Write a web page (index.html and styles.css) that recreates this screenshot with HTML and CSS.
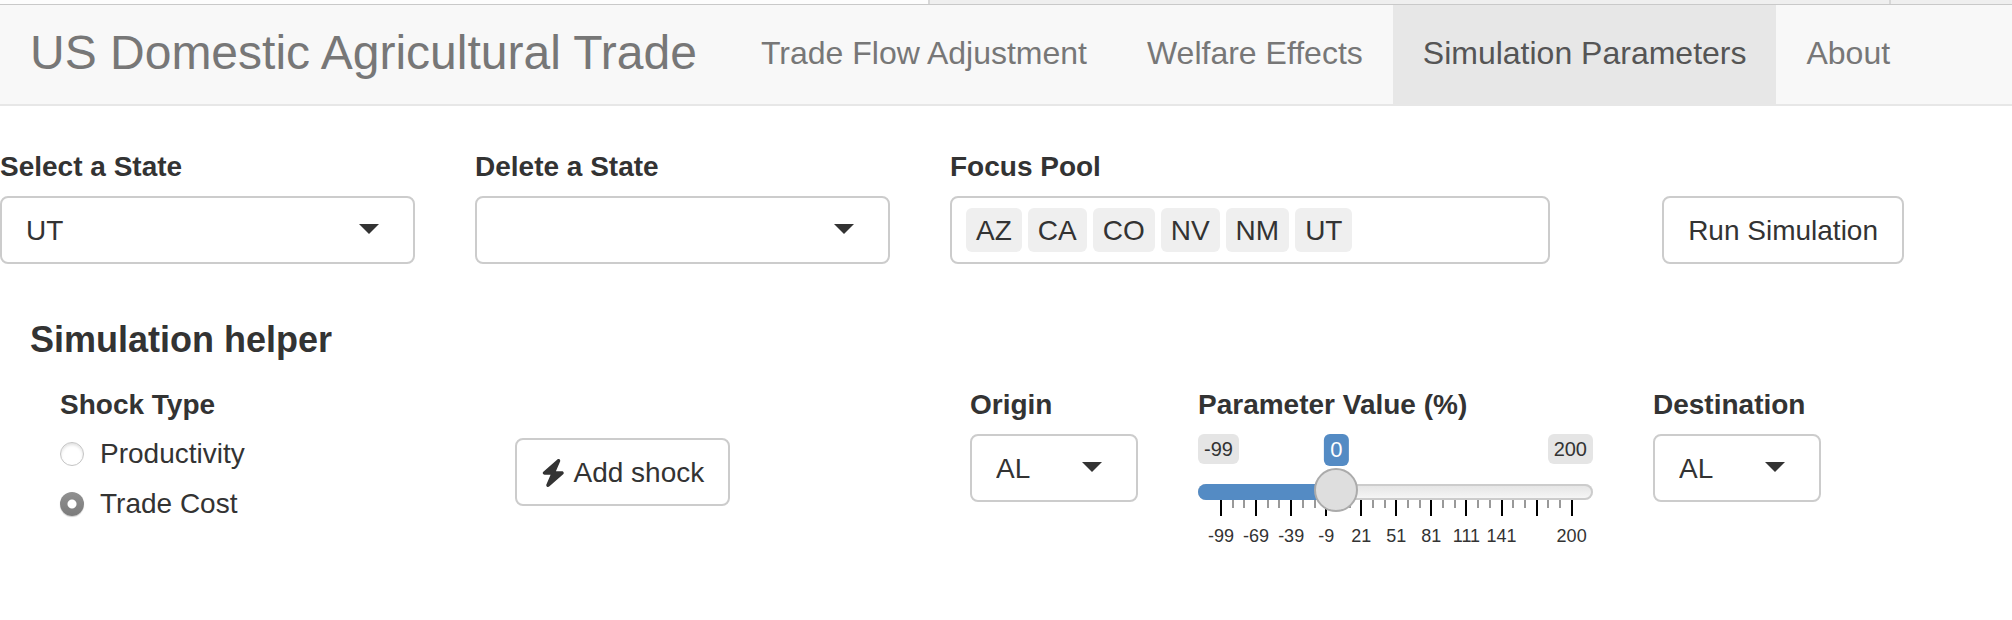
FILE: index.html
```html
<!DOCTYPE html>
<html lang="en">
<head>
<meta charset="utf-8">
<title>US Domestic Agricultural Trade</title>
<link rel="stylesheet" href="styles.css">
</head>
<body>
<div class="tabstrip"><span></span><span></span><span></span></div>
<nav class="navbar">
  <a class="brand" href="#">US Domestic Agricultural Trade</a>
  <a class="tab" href="#">Trade Flow Adjustment</a>
  <a class="tab" href="#">Welfare Effects</a>
  <a class="tab active" href="#" aria-current="page">Simulation Parameters</a>
  <a class="tab" href="#">About</a>
</nav>
<main>
  <div class="state-row">
    <div>
      <label class="title" for="add-state">Select a State</label>
      <div class="select"><select id="add-state"><option>UT</option></select></div>
    </div>
    <div>
      <label class="title" for="delete-state">Delete a State</label>
      <div class="select"><select id="delete-state"><option></option></select></div>
    </div>
    <div>
      <span class="title" id="pool-label">Focus Pool</span>
      <div class="pool" role="group" aria-labelledby="pool-label">
        <span class="item">AZ</span><span class="item">CA</span><span class="item">CO</span><span class="item">NV</span><span class="item">NM</span><span class="item">UT</span>
      </div>
    </div>
    <button class="btn run" type="button">Run Simulation</button>
  </div>

  <h4>Simulation helper</h4>

  <div class="shock-row">
    <div role="radiogroup" aria-labelledby="shock-label">
      <span class="title" id="shock-label">Shock Type</span>
      <label class="radio"><input type="radio" name="shock">Productivity</label>
      <label class="radio"><input type="radio" name="shock" checked>Trade Cost</label>
    </div>
    <button class="btn add" type="button">
      <svg class="bolt" viewBox="0 0 448 512" aria-hidden="true"><path d="M349.4 44.6c5.9-13.7 1.5-29.7-10.6-38.5s-28.6-8-39.9 1.8l-256 224c-10 8.800-13.600 22.900-8.900 35.300S50.700 288 64 288H175.500L98.600 467.400c-5.900 13.700-1.500 29.700 10.600 38.500s28.600 8 39.900-1.800l256-224c10-8.800 13.600-22.900 8.900-35.300s-16.600-20.700-30-20.700H272.500L349.400 44.600z"/></svg>
      Add shock
    </button>
    <div>
      <label class="title" for="origin">Origin</label>
      <div class="select"><select id="origin"><option>AL</option></select></div>
    </div>
    <div>
      <label class="title" for="param">Parameter Value (%)</label>
      <div class="badges">
        <span class="limit">-99</span>
        <span class="limit">200</span>
        <output class="value" for="param" style="left: 35%">0</output>
      </div>
      <div class="slider">
        <div class="bar"><div class="fill" style="width: 35%"></div></div>
        <input type="range" id="param" min="-99" max="200" value="0">
      </div>
      <div class="ticks">
        <span class="major">-99</span><span></span><span></span>
        <span class="major">-69</span><span></span><span></span>
        <span class="major">-39</span><span></span><span></span>
        <span class="major">-9</span><span></span><span></span>
        <span class="major">21</span><span></span><span></span>
        <span class="major">51</span><span></span><span></span>
        <span class="major">81</span><span></span><span></span>
        <span class="major">111</span><span></span><span></span>
        <span class="major">141</span><span></span><span></span>
        <span class="major"></span><span></span><span></span>
        <span class="major">200</span>
      </div>
    </div>
    <div>
      <label class="title" for="destination">Destination</label>
      <div class="select"><select id="destination"><option>AL</option></select></div>
    </div>
  </div>
</main>
</body>
</html>
```
FILE: styles.css
```css
* { box-sizing: border-box; }

body {
  margin: 0;
  background: #fff;
  color: #333;
  font: 28px/40px "Helvetica Neue", Helvetica, "Liberation Sans", Arial, sans-serif;
}

.tabstrip {
  display: grid;
  grid-template-columns: 928fr 961fr 123fr;
  height: 5px;
  border-bottom: 1px solid #c9c9c9;
  background: #efefef;
}
.tabstrip span + span { border-left: 2px solid #d8d8d8; }
.tabstrip span:first-child { background: #fdfdfd; }

.navbar {
  display: flex;
  border-bottom: 2px solid #e7e7e7;
  background: #f8f8f8;
}
.navbar a {
  padding: 28px 30px 31px;
  color: #777;
  text-decoration: none;
  white-space: nowrap;
}
.navbar .brand { padding-right: 34px; font-size: 48px; }
.navbar .tab { font-size: 32px; }
.navbar .active { background: #e7e7e7; color: #555; }

main { padding-top: 41px; }

.state-row,
.shock-row {
  display: grid;
  column-gap: 60px;
  align-items: start;
}
.state-row {
  grid-template-columns: minmax(0, 415fr) minmax(0, 415fr) minmax(0, 600fr) minmax(0, 294fr);
  padding-right: 108px;
}
.shock-row {
  grid-template-columns: minmax(0, 395fr) minmax(0, 395fr) minmax(0, 168fr) minmax(0, 395fr) minmax(0, 168fr);
  padding: 0 191px 0 60px;
}

.title {
  display: block;
  margin-bottom: 9px;
  font-weight: bold;
  white-space: nowrap;
}

h4 {
  margin: 56px 30px 25px;
  font-size: 36px;
  line-height: 40px;
}

.select { position: relative; }
.select::after {
  content: "";
  position: absolute;
  top: 28px;
  right: 36px;
  border: 10px solid transparent;
  border-top-color: #333;
  border-bottom: 0;
  pointer-events: none;
}
select,
.btn,
.pool {
  height: 68px;
  border: 2px solid #ccc;
  border-radius: 8px;
  background: #fff;
  color: inherit;
  font: inherit;
}
select {
  display: block;
  width: 100%;
  padding: 2px 24px 0;
  appearance: none;
}

.pool {
  display: flex;
  gap: 6px;
  padding: 10px 14px;
}
.item {
  height: 44px;
  padding: 0 10px;
  border-radius: 6px;
  background: #efefef;
  line-height: 46px;
}

.btn {
  display: flex;
  align-items: center;
  gap: 8px;
  padding: 2px 24px 0;
  white-space: nowrap;
}
.run { align-self: end; justify-self: end; }
.add { justify-self: start; margin-top: 53px; }
.bolt { height: 28px; fill: #333; }

.radio {
  display: flex;
  align-items: center;
  gap: 16px;
  margin-bottom: 10px;
}
.radio input {
  width: 24px;
  height: 24px;
  margin: 0;
  border: 1px solid #c4c4c4;
  border-radius: 50%;
  background: #fff;
  box-shadow: inset 0 2px 3px #e2e2e2;
  appearance: none;
}
.radio input:checked {
  border: 0;
  background: radial-gradient(circle, #fff 4px, transparent 5px), linear-gradient(#919191, #7b7b7b);
  box-shadow: 0 1px 1px #ccc;
}

.badges {
  position: relative;
  display: flex;
  justify-content: space-between;
  align-items: start;
  height: 34px;
}
.limit,
.value {
  padding: 0 6px;
  border-radius: 6px;
}
.limit {
  background: #e5e5e5;
  font-size: 20px;
  line-height: 30px;
}
.value {
  position: absolute;
  top: 0;
  transform: translateX(-50%);
  background: #548bc4;
  color: #fff;
  font-size: 22px;
  line-height: 32px;
}

.slider {
  position: relative;
  z-index: 1;
  display: grid;
}
.bar,
.slider input { grid-area: 1 / 1; }
.bar {
  height: 16px;
  margin-top: 16px;
  border-radius: 8px;
  background: linear-gradient(#e3e3e3, #f8f8f8);
  box-shadow: inset 0 0 0 2px #ccc;
  overflow: hidden;
}
.fill { height: 100%; background: #548bc4; }
.slider input {
  width: 100%;
  height: 44px;
  margin: 0;
  background: transparent;
  appearance: none;
}
.slider input::-webkit-slider-thumb {
  width: 44px;
  height: 44px;
  border: 2px solid #ababab;
  border-radius: 50%;
  background: #dedede;
  appearance: none;
}

.ticks {
  display: flex;
  justify-content: space-between;
  margin: -12px 20px 0 22px;
  font-size: 18px;
  line-height: 20px;
}
.ticks span {
  display: flex;
  flex-direction: column;
  align-items: center;
  width: 2px;
}
.ticks span::before {
  content: "";
  width: 2px;
  height: 8px;
  background: #999;
}
.ticks .major::before {
  height: 16px;
  margin-bottom: 10px;
  background: #000;
}
```
